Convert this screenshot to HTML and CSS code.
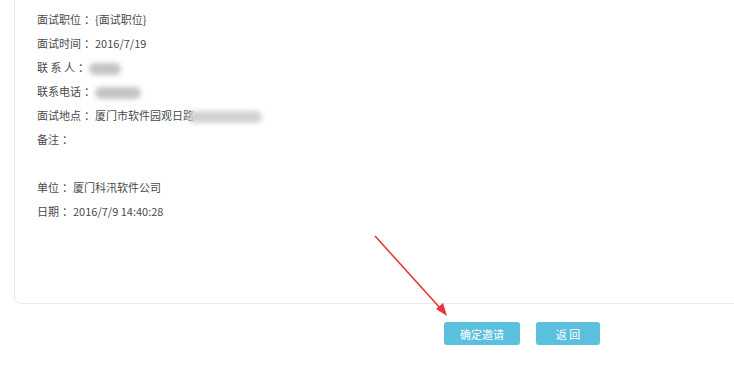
FILE: index.html
```html
<!DOCTYPE html>
<html lang="zh-CN">
<head>
<meta charset="utf-8">
<link rel="stylesheet" href="styles.css">
</head>
<body>
<div class="page">
  <div class="card">
    <p class="row">面试职位<span class="colon">：</span>{面试职位}</p>
    <p class="row">面试时间<span class="colon">：</span>2016/7/19</p>
    <p class="row">联 系 人<span class="colon">：</span><span class="blur blur-a"></span></p>
    <p class="row">联系电话<span class="colon">：</span><span class="blur blur-b"></span></p>
    <p class="row">面试地点<span class="colon">：</span>厦门市软件园观日路<span class="blur blur-c"></span></p>
    <p class="row">备注<span class="colon">：</span></p>
    <p class="row"></p>
    <p class="row">单位<span class="colon">：</span>厦门科汛软件公司</p>
    <p class="row">日期<span class="colon">：</span>2016/7/9 14:40:28</p>
  </div>
  <div class="actions">
    <button class="btn btn-ok">确定邀请</button>
    <button class="btn btn-back">返 回</button>
  </div>
  <svg class="arrow" width="734" height="367" viewBox="0 0 734 367">
    <line x1="375" y1="236" x2="441" y2="309" stroke="#e8343a" stroke-width="1.6"/>
    <polygon points="447,316 436,309 443,303" fill="#e8343a"/>
  </svg>
</div>
</body>
</html>
```
FILE: styles.css
```css
html, body {
  margin: 0;
  padding: 0;
  background: #fff;
}
body {
  font-family: "Noto Sans CJK SC", "Noto Sans", sans-serif;
  font-size: 11px;
  color: #4a4a4a;
  width: 734px;
  height: 367px;
  overflow: hidden;
}
.page {
  position: relative;
  padding-left: 14px;
}
.card {
  border: 1px solid #ebebeb;
  border-top: none;
  border-right: none;
  border-radius: 0 0 0 7px;
  padding: 7px 0 80px 22px;
  margin-right: -20px;
}
.row {
  margin: 0;
  height: 24px;
  line-height: 24px;
  white-space: nowrap;
}
.colon {
  padding-left: 3px;
}
.blur {
  display: inline-block;
  vertical-align: middle;
  height: 12px;
  border-radius: 6px;
  background: #c4c4c4;
  filter: blur(2.5px);
}
.blur-a {
  width: 32px;
}
.blur-b {
  width: 46px;
}
.blur-c {
  width: 74px;
  margin-left: -6px;
  background: #d2d2d2;
}
.actions {
  display: flex;
  gap: 16px;
  padding-left: 430px;
  margin-top: 18px;
}
.btn {
  border: none;
  border-radius: 3px;
  background: #5bc0de;
  color: #fff;
  font-family: "Noto Sans CJK SC", "Noto Sans", sans-serif;
  font-size: 11px;
  height: 23px;
  padding: 0;
  cursor: pointer;
}
.btn-ok {
  width: 76px;
}
.btn-back {
  width: 64px;
}
.arrow {
  position: absolute;
  left: 0;
  top: 0;
  pointer-events: none;
}
```
